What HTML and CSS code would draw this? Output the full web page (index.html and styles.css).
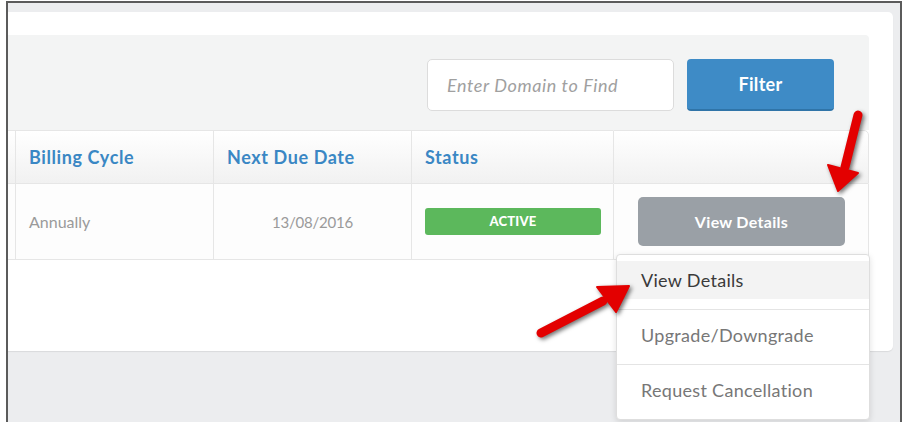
FILE: index.html
```html
<!DOCTYPE html>
<html lang="en">
<head>
    <meta charset="UTF-8">
    <title>My Domains</title>
    <link rel="stylesheet" href="styles.css">
</head>
<body>
    <div class="frame">
        <div class="card">
            <div class="toolbar">
                <input type="text" class="search" placeholder="Enter Domain to Find">
                <button class="btn-filter">Filter</button>
            </div>

            <table class="domains">
                <colgroup>
                    <col class="c-domain">
                    <col class="c-cycle">
                    <col class="c-due">
                    <col class="c-status">
                    <col class="c-actions">
                </colgroup>
                <thead>
                    <tr>
                        <th></th>
                        <th>Billing Cycle</th>
                        <th>Next Due Date</th>
                        <th>Status</th>
                        <th></th>
                    </tr>
                </thead>
                <tbody>
                    <tr>
                        <td></td>
                        <td class="muted">Annually</td>
                        <td class="muted date">13/08/2016</td>
                        <td><span class="badge">ACTIVE</span></td>
                        <td class="actions">
                            <button class="btn-details">View Details</button>
                            <!-- dropdown opened from the button -->
                            <ul class="menu">
                                <li><a class="hover">View Details</a></li>
                                <li><a>Upgrade/Downgrade</a></li>
                                <li><a>Request Cancellation</a></li>
                            </ul>
                        </td>
                    </tr>
                </tbody>
            </table>
        </div>
    </div>

    <!-- annotation arrows -->
    <svg class="arrows" width="904" height="422" viewBox="0 0 904 422">
        <line x1="858" y1="115" x2="845" y2="167" class="shaft"/>
        <polygon points="828,165 858,173 838,191" class="head"/>
        <line x1="541" y1="333" x2="603" y2="301" class="shaft"/>
        <polygon points="597,287 629,286 616,312" class="head"/>
    </svg>
</body>
</html>
```

FILE: styles.css
```css
body {
    margin: 0;
    position: relative;
    width: 904px;
    height: 422px;
    overflow: hidden;
    background: #fff;
    font-family: Lato, "Open Sans", Arial, sans-serif;
}

.frame {
    box-sizing: border-box;
    width: 896px;
    height: 421px;
    margin: 1px 0 0 6px;
    padding-top: 9px;
    border: 2px solid #5b5b5b;
    border-bottom: none;
    background: #ecedef;
    overflow: hidden;
}

.card {
    margin: 0 7px 0 -100px;
    padding: 23px 24px 91px 0;
    background: #fff;
    border-radius: 5px;
    box-shadow: 0 1px 1px rgba(0, 0, 0, 0.08);
}

.toolbar {
    display: flex;
    justify-content: flex-end;
    gap: 13px;
    height: 95px;
    box-sizing: border-box;
    padding: 24px 35px 19px 0;
    background: #f3f4f4;
    border-radius: 0 4px 0 0;
}

.search {
    box-sizing: border-box;
    width: 247px;
    height: 52px;
    padding: 0 19px;
    border: 1px solid #dcdcdc;
    border-radius: 5px;
    background: #fff;
    font-family: inherit;
    font-size: 18px;
    font-style: italic;
    letter-spacing: 0.6px;
}

.search::placeholder {
    color: #a0a0a0;
}

.btn-filter {
    width: 147px;
    height: 52px;
    border: none;
    border-bottom: 2px solid #2f74a8;
    border-radius: 4px;
    background: #3e8bc6;
    color: #fff;
    font-family: inherit;
    font-size: 18px;
    font-weight: bold;
    letter-spacing: 0.3px;
}

.domains {
    width: 100%;
    table-layout: fixed;
    border-collapse: separate;
    border-spacing: 0;
}

.c-domain { width: 107px; }
.c-cycle { width: 198px; }
.c-due { width: 198px; }
.c-status { width: 202px; }
.c-actions { width: 256px; }

.domains th,
.domains td {
    border-left: 1px solid #e6e6e6;
    border-bottom: 1px solid #e6e6e6;
    text-align: left;
    padding: 0 0 0 13px;
}

.domains th:last-child,
.domains td:last-child {
    border-right: 1px solid #e6e6e6;
}

.domains th {
    height: 52px;
    border-top: 1px solid #e6e6e6;
    background: linear-gradient(#ffffff, #f1f1f1);
    color: #3a87c4;
    font-size: 18px;
    font-weight: bold;
    letter-spacing: 0.6px;
}

.domains th:last-child {
    border-top-right-radius: 5px;
}

.domains td {
    height: 75px;
    background: #fdfdfd;
    font-size: 16px;
}

.muted {
    color: #9a9a9a;
}

.domains td.date {
    text-align: center;
    padding: 0;
    font-size: 15px;
    letter-spacing: -0.2px;
}

.badge {
    display: block;
    width: 176px;
    height: 27px;
    line-height: 27px;
    border-radius: 3px;
    background: #5cb85c;
    color: #fff;
    font-size: 13px;
    font-weight: 900;
    letter-spacing: 0.2px;
    text-align: center;
}

.actions {
    position: relative;
}

.domains td.actions {
    padding-left: 24px;
}

.btn-details {
    width: 207px;
    height: 49px;
    border: none;
    border-radius: 5px;
    background: #9aa0a6;
    color: #fff;
    font-family: inherit;
    font-size: 16px;
    font-weight: bold;
    letter-spacing: 0.3px;
}

.menu {
    position: absolute;
    left: 2px;
    top: 70px;
    width: 252px;
    margin: 0;
    padding: 0;
    list-style: none;
    background: #fff;
    border: 1px solid #dedede;
    border-radius: 4px;
    box-shadow: 0 2px 6px rgba(0, 0, 0, 0.12);
}

.menu li {
    padding: 6px 0 10px;
    border-top: 1px solid #e4e4e4;
}

.menu li:first-child {
    border-top: none;
}

.menu a {
    display: block;
    padding: 8px 24px;
    line-height: 22px;
    font-size: 18px;
    letter-spacing: 0.3px;
    color: #777;
}

.menu a.hover {
    background: #f3f3f3;
    color: #3a3a3a;
}

.arrows {
    position: absolute;
    left: 0;
    top: 0;
    pointer-events: none;
    filter: drop-shadow(2px 2px 2px rgba(0, 0, 0, 0.55));
}

.shaft {
    stroke: #e30000;
    stroke-width: 9;
    stroke-linecap: round;
}

.head {
    fill: #e30000;
    stroke: #e30000;
    stroke-width: 2;
    stroke-linejoin: round;
}
```
